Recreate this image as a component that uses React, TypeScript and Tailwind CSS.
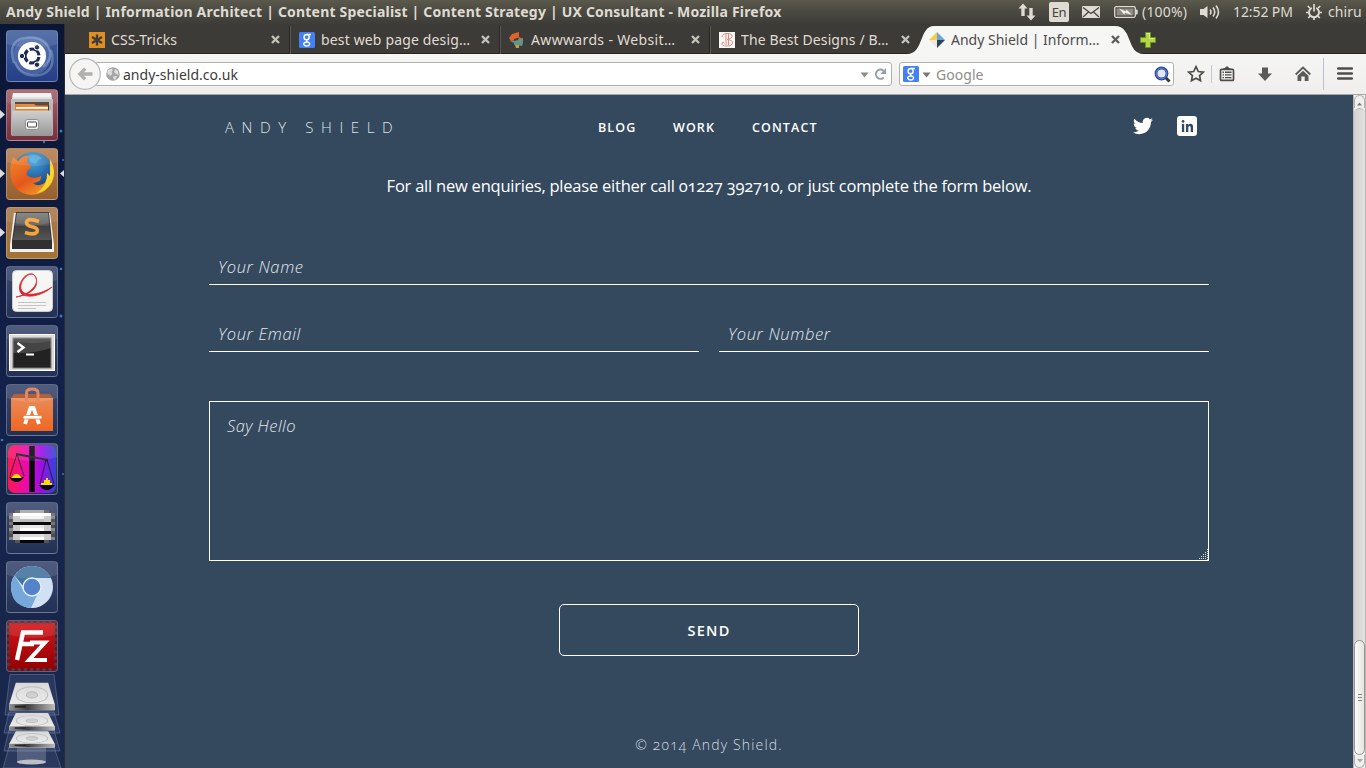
import type { ReactNode } from "react";

const UI = "font-['Noto_Sans','Open_Sans',sans-serif]";

function Tile({ bg, children, left, right }: { bg: string; children: ReactNode; left?: boolean; right?: boolean }) {
  return (
    <div className="relative h-[52px] w-[52px] shrink-0">
      <div className={`h-[52px] w-[52px] overflow-hidden rounded-[4px] border border-white/25 ${bg}`}>
        <svg width="50" height="50" viewBox="1 1 50 50">
          {children}
          <path d="M1 1H51V14Q28 22 1 14Z" fill="#fff" opacity=".1" />
        </svg>
      </div>
      {left && (
        <svg className="absolute -left-[6px] top-[20px]" width="6" height="11" viewBox="0 0 6 11">
          <path d="M0 1L5 5.5L0 10Z" fill="#dcdcdc" />
        </svg>
      )}
      {right && (
        <svg className="absolute left-[53px] top-[20px]" width="6" height="11" viewBox="0 0 6 11">
          <path d="M6 1L1 5.5L6 10Z" fill="#dcdcdc" />
        </svg>
      )}
    </div>
  );
}

const DARK = "bg-gradient-to-b from-[#3b4a70] to-[#243156]";

function Disk({ y, sy }: { y: number; sy: number }) {
  return (
    <g transform={`translate(32 ${y}) scale(1.01 ${sy})`}>
      <path d="M-16 -18H16L22.500 3V9H-22.500V3Z" fill="url(#diskTop)" />
      <ellipse cx="0" cy="-6" rx="15.500" ry="8" fill="none" stroke="#bdbdbd" strokeWidth="1" />
      <ellipse cx="0" cy="-6" rx="5.500" ry="3" fill="#d0d0d0" stroke="#b5b5b5" />
      <rect x="-22.500" y="3" width="45" height="6" fill="url(#diskEdge)" />
      <rect x="-17" y="4.500" width="11" height="2" fill="#222" />
    </g>
  );
}

function Launcher() {
  const rows = [
    { x: 9, w: 34, e: "#5d5d5d", c: "#a8a8a8" },
    { x: 3, w: 46, e: "#6a6a6a", c: "#ffffff" },
    { x: 3, w: 46, e: "#8a8a8a", c: "#f4f4f4" },
    { x: 3, w: 46, e: "#555555", c: "#bdbdbd" },
    { x: 3, w: 46, e: "#777777", c: "#0a0a0a" },
    { x: 3, w: 46, e: "#4a4a4a", c: "#e8e8e8" },
    { x: 3, w: 46, e: "#8a8a8a", c: "#ffffff" },
    { x: 3, w: 46, e: "#606060", c: "#0c0c0c" },
    { x: 3, w: 46, e: "#4d4d4d", c: "#dcdcdc" },
    { x: 3, w: 46, e: "#858585", c: "#ffffff" },
    { x: 9, w: 34, e: "#555555", c: "#050505" },
  ];
  return (
    <aside className="relative flex w-[65px] shrink-0 flex-col gap-[7px] overflow-hidden border-r border-[#2a2b33] bg-gradient-to-b from-[#0b1535] via-[#13224b] to-[#1b284c] pl-[6px] pt-[6px]">
      <svg className="absolute left-0 top-0" width="65" height="744">
        <g fill="#3b78b8">
          <circle cx="61" cy="107" r="1.500" />
          <circle cx="44" cy="118" r="1.200" />
          <circle cx="61" cy="245" r="1.300" />
          <circle cx="61" cy="292" r="1.500" />
          <circle cx="2" cy="416" r="1.300" />
          <circle cx="63" cy="450" r="1" />
          <circle cx="63" cy="136" r="1" />
        </g>
      </svg>

      <Tile bg="bg-gradient-to-b from-[#43629f] to-[#253f87]">
        <circle cx="26" cy="26" r="19" fill="#6d87bb" opacity=".45" />
        <path d="M8 33Q1 12 18 8Q39 5 44 21Q46 30 37 37" fill="none" stroke="#9fb3d9" strokeWidth="2.500" opacity=".45" />
        <path d="M45 20Q51 40 34 45Q15 48 9 32" fill="none" stroke="#9fb3d9" strokeWidth="2.500" opacity=".4" />
        <circle cx="26" cy="26" r="14" fill="#fff" />
        <circle cx="26" cy="26" r="7" fill="none" stroke="#1d2c56" strokeWidth="3.200" strokeDasharray="12.660 2" strokeDashoffset="-1" />
        <g fill="#1d2c56" stroke="#fff" strokeWidth="1">
          <circle cx="16" cy="26" r="2.700" />
          <circle cx="31" cy="17.300" r="2.700" />
          <circle cx="31" cy="34.700" r="2.700" />
        </g>
      </Tile>

      <Tile bg="bg-gradient-to-b from-[#a3616b] to-[#772f3b]" left>
        <path d="M7 4H45L47 16H5Z" fill="#dedede" />
        <path d="M7 4H45L45.500 8H6.500Z" fill="#f2f2f2" />
        <rect x="5" y="10" width="42" height="36" fill="#b5b5b5" />
        <rect x="9" y="13" width="34" height="9" fill="#4a3428" />
        <path d="M9 15H28L30 16.500H42V22H9Z" fill="#e57f28" />
        <rect x="10" y="18" width="32" height="1.800" fill="#fff" />
        <path d="M6.500 21.500H45.500L46.500 47H5.500Z" fill="url(#silver)" />
        <rect x="19.500" y="30.500" width="13" height="10" rx="2" fill="#f0f0f0" stroke="#8f8f8f" />
        <rect x="21.500" y="33" width="9" height="5" rx="1" fill="#fff" stroke="#444" />
      </Tile>

      <Tile bg="bg-gradient-to-b from-[#b57f55] to-[#96602f]" left right>
        <circle cx="27" cy="24" r="20" fill="url(#globe)" />
        <path d="M22 8Q30 5 36 10Q31 12 30 16L24 14Z" fill="#62b5e5" opacity=".6" />
        <path d="M7 9L12 13Q17 7 23 8L21 14Q28 19 22 22Q18 27 24 29Q30 31 35 28Q36 34 27 35Q33 40 40 34Q48 27 45 13Q51 25 45 36Q39 46 26 47Q11 46 6 34Q2 21 7 9Z" fill="url(#fox)" />
        <path d="M44 11Q51 23 46 34Q40 44 31 45Q42 36 41 25L44 28Z" fill="#fbd52c" />
      </Tile>

      <Tile bg="bg-gradient-to-b from-[#a8794d] to-[#a47231]" left>
        <path d="M8 6H44L48 38V45H4V38Z" fill="#f1f1f1" />
        <path d="M10 5H43L46 34V42H6V34Z" fill="#303030" />
        <path d="M11 6H42L45 33H7Z" fill="url(#key)" />
        <path d="M33 14.500Q22 10.500 20.500 15Q20 19 27 20Q33 21.500 31 25Q28 28.500 19 25.500" fill="none" stroke="#f8a33a" strokeWidth="3.600" />
      </Tile>

      <Tile bg={DARK}>
        <rect x="6.500" y="4.500" width="40" height="41" rx="4" fill="#f5f5f3" stroke="#ccc" />
        <path d="M10 31C24 29 35 21 29 10C24 4 13 15 15 23C18 32 36 28 46 21C37 29 25 32 17 29C8 23 18 5 27 8C36 14 27 28 10 31Z" fill="#da2430" stroke="#da2430" strokeWidth=".8" />
        <path d="M12 36.500H40M12 39.500H40M12 42.500H30" stroke="#c4c4c4" strokeWidth="1.200" />
      </Tile>

      <Tile bg={DARK}>
        <rect x="3.500" y="9.500" width="45" height="36" fill="#d9d9d9" stroke="#fff" />
        <rect x="7" y="13" width="38" height="30" fill="#222" stroke="#777" />
        <path d="M7 13H45V23Q28 29 7 28Z" fill="#fff" opacity=".16" />
        <path d="M11.500 18L17.500 22.500L11.500 27" fill="none" stroke="#fff" strokeWidth="2.400" />
        <path d="M20 29.500H28" stroke="#fff" strokeWidth="2.200" />
      </Tile>

      <Tile bg={DARK}>
        <path d="M5 14L8 10H44L47 14V47H5Z" fill="#a94e25" />
        <path d="M5 14H47V47H5Z" fill="url(#bag)" />
        <path d="M20.500 17V9Q20.500 5 26 5Q32 5 32 9V17" fill="none" stroke="#e27a4e" strokeWidth="3" />
        <path d="M19 40L24.500 24H27.500L33 40" fill="none" stroke="#fff" strokeWidth="3.800" />
        <rect x="17" y="31.500" width="19" height="3.500" rx="1.500" fill="#fff" stroke="#ee702e" strokeWidth=".7" />
      </Tile>

      <Tile bg={DARK}>
        <rect x="2" y="2" width="48" height="48" rx="7" fill="url(#scales)" />
        <path d="M26 3V49" stroke="#090909" strokeWidth="5.500" />
        <g stroke="#231827" fill="none">
          <path d="M10 11L42 17" strokeWidth="1.800" />
          <path d="M11 11L4 33M11 11L18 33M40 17L34 41M41 17L48 41" strokeWidth=".9" />
        </g>
        <path d="M3 34H18Q15 39 10.500 39Q6 39 3 34ZM33 42H49Q45 47 41 47Q36 47 33 42Z" fill="#090909" />
        <path d="M5 35L9 31H12L16 35ZM35 42V40H38V37H40V35H42V37H44V40H46V42Z" fill="#fd0" />
      </Tile>

      <Tile bg={DARK}>
        {rows.map((r, i) => (
          <g key={i}>
            <rect x={r.x} y={8 + i * 3} width={r.w} height="3" fill={r.e} />
            <rect x="7" y={8 + i * 3} width={i === 0 || i === 10 ? 0 : 38} height="3" fill={i % 3 === 1 ? r.c : "#c9c9c9"} />
            <rect x="14" y={8 + i * 3} width="24" height="3" fill={r.c} />
            <rect x="20" y={8 + i * 3} width="13" height="3" fill={r.c} />
          </g>
        ))}
      </Tile>

      <Tile bg={DARK}>
        <circle cx="26" cy="26" r="21" fill="#cfe1f3" />
        <path d="M8.500 14.500Q15 5 26 5Q39 5 45 17H26Q18 18 17 25Z" fill="#43739f" />
        <path d="M8.500 14.500L18 30Q21 35 27 35L31 34L25 47Q5 45 5 26Q5 19 8.500 14.500Z" fill="#76a8da" />
        <circle cx="26" cy="26" r="9" fill="#5583cb" stroke="#e6f1fc" strokeWidth="1.400" />
      </Tile>

      <Tile bg="bg-[#4a2034]">
        <rect x="3" y="3" width="46" height="46" fill="url(#fz)" />
        <g fill="none" stroke="#5d3345" strokeWidth="3.600" strokeDasharray="0.010 6.200" strokeLinecap="round">
          <path d="M7 2.500H48M7 49.500H48M2.500 7V48M49.500 7V48" />
        </g>
        <g fill="none" stroke="#fff" strokeWidth="4.500">
          <path d="M11 40L17 12.500H37M14 24H28" />
          <path d="M24 22.500H39L23 40H41" strokeWidth="4" />
        </g>
      </Tile>

      <svg className="absolute left-0 top-[650px]" width="65" height="94" viewBox="0 0 65 94">
        <g fill="#8ca0cc" fillOpacity=".14" stroke="#94a5cb" strokeOpacity=".35">
          <path d="M10 .5H54L59 41H5Z" />
          <path d="M9 38H54L60 59H4Z" />
          <path d="M9 56H54L60 77H4Z" />
          <path d="M9 73H54L61 94H3Z" />
        </g>
        <rect x="17" y="73" width="29" height="15" fill="#aeb5c4" opacity=".3" />
        <ellipse cx="31.500" cy="88" rx="14.500" ry="2.500" fill="#bcc0c4" />
        <Disk y={50.500} sy={0.64} />
        <Disk y={68} sy={0.6} />
        <Disk y={27} sy={1.02} />
      </svg>

      <svg className="absolute" width="0" height="0">
        <defs>
          <linearGradient id="silver" x2="0" y2="1"><stop stopColor="#d0d0d0" /><stop offset="1" stopColor="#979797" /></linearGradient>
          <radialGradient id="globe" cx=".5" cy=".2" r=".8"><stop stopColor="#43a5df" /><stop offset="1" stopColor="#123673" /></radialGradient>
          <linearGradient id="fox" x2=".7" y2="1"><stop stopColor="#f18a2b" /><stop offset=".6" stopColor="#e5571d" /><stop offset="1" stopColor="#f49a25" /></linearGradient>
          <linearGradient id="key" x2="0" y2="1"><stop stopColor="#7c7c7c" /><stop offset=".45" stopColor="#5a5a5a" /><stop offset=".5" stopColor="#404040" /><stop offset="1" stopColor="#555" /></linearGradient>
          <linearGradient id="bag" x2="0" y2="1"><stop stopColor="#ea8b57" /><stop offset="1" stopColor="#ef6623" /></linearGradient>
          <linearGradient id="scales"><stop stopColor="#ff1654" /><stop offset=".4" stopColor="#e90bae" /><stop offset=".7" stopColor="#9b0ee8" /><stop offset="1" stopColor="#3145d7" /></linearGradient>
          <linearGradient id="fz" x2="0" y2="1"><stop stopColor="#d2151b" /><stop offset="1" stopColor="#950000" /></linearGradient>
          <linearGradient id="diskTop" x2="0" y2="1"><stop stopColor="#d9d9d9" /><stop offset="1" stopColor="#f0f0f0" /></linearGradient>
          <linearGradient id="diskEdge"><stop stopColor="#909090" /><stop offset=".4" stopColor="#404040" /><stop offset="1" stopColor="#bbb" /></linearGradient>
        </defs>
      </svg>
    </aside>
  );
}

function TopPanel() {
  return (
    <header className={`${UI} flex h-[24px] items-center justify-between bg-gradient-to-b from-[#5b594c] via-[#4a4941] to-[#3d3c37] pl-[6px] pr-[4px] text-[#dfdbd2]`}>
      <span className="whitespace-nowrap text-[14px] font-bold leading-[24px] tracking-[0.2px]">
        Andy Shield | Information Architect | Content Specialist | Content Strategy | UX Consultant - Mozilla Firefox
      </span>
      <div className="flex h-[24px] items-center whitespace-nowrap text-[14px] leading-[24px]">
        <svg width="18" height="18" viewBox="0 0 18 18" className="mr-[13px]">
          <path d="M5 0.500L9.500 5.500H6.700V13H3.300V5.500H0.500ZM13 17.500L8.500 12.500H11.300V5H14.700V12.500H17.500Z" fill="#dfdbd2" />
        </svg>
        <div className="mr-[13px] flex h-[20px] w-[20px] items-center justify-center rounded-[2px] bg-[#dfdbd2] text-[13px] tracking-[-0.5px] text-[#44433d]">En</div>
        <svg width="18" height="12" viewBox="0 0 18 12" className="mr-[14px]">
          <rect width="18" height="12" rx="1" fill="#dfdbd2" />
          <path d="M1 1.500L9 7.500L17 1.500M1 11L6.500 6M17 11L11.500 6" fill="none" stroke="#44433d" strokeWidth="1.200" />
        </svg>
        <svg width="24" height="12" viewBox="0 0 24 12" className="mr-[4px]">
          <rect x=".7" y=".7" width="20.600" height="10.600" rx="1.500" fill="none" stroke="#dfdbd2" strokeWidth="1.300" />
          <rect x="2.500" y="2.500" width="17" height="7" fill="#8f8c83" />
          <rect x="21.500" y="3.500" width="2.200" height="5" rx="1" fill="#dfdbd2" />
          <path d="M5 2.500L12 5.500L12.500 3.500L18 9L11 6.800L10.500 8.800Z" fill="#f4f1ea" />
        </svg>
        <span className="w-[47px] tracking-[0.2px]">(100%)</span>
        <svg width="20" height="16" viewBox="0 0 20 16" className="ml-[11px] mr-[13px]">
          <path d="M0 5H3.500L7.500 2V14L3.500 11H0Z" fill="#dfdbd2" />
          <path d="M10 5.500Q12 8 10 10.500M13 3.500Q16.500 8 13 12.500M16 1.500Q21 8 16 14.500" fill="none" stroke="#dfdbd2" strokeWidth="1.600" />
        </svg>
        <span className="w-[61px] tracking-[-0.1px]">12:52 PM</span>
        <svg width="16" height="16" viewBox="0 0 16 16" className="ml-[12px] mr-[6px]">
          <path d="M5.700 3.800A5 5 0 1 0 10.300 3.800" fill="none" stroke="#dfdbd2" strokeWidth="1.900" />
          <path d="M8 0V7.500M1.800 2L3.800 4M14.200 2L12.200 4M0 8.500H2.500M13.500 8.500H16M2.200 14L4.200 12M13.800 14L11.800 12M8 13V16" stroke="#dfdbd2" strokeWidth="1.700" />
        </svg>
        <span className="w-[34px] tracking-[0.05px]">chiru</span>
      </div>
    </header>
  );
}

function Tab({ icon, label, active, sep, ls }: { icon: ReactNode; label: string; active?: boolean; sep?: boolean; ls: string }) {
  return (
    <div className="relative flex h-[30px] w-[210px] shrink-0 items-center pb-px pl-[8px]">
      {active && (
        <svg className="absolute -left-[14px] top-[1px]" width="238" height="29" viewBox="0 0 238 29">
          <path d="M0 29C17 29 12 1 27 1H208C226 1 219 29 237 29Z" fill="#f6f6f5" />
        </svg>
      )}
      <svg width="16" height="16" viewBox="0 0 16 16" className="relative mt-[3px]">{icon}</svg>
      <span className={`relative ml-[6px] mt-[3px] w-[160px] overflow-hidden whitespace-nowrap text-[14px] leading-[20px] ${ls} ${active ? "text-[#4c4c4c]" : "text-[#e0dcd3]"}`}>{label}</span>
      <svg width="9" height="9" viewBox="0 0 9 9" className="relative mt-[3px]">
        <path d="M1 1L8 8M8 1L1 8" stroke={active ? "#5d5d5b" : "#c4c1b9"} strokeWidth="2.400" />
      </svg>
      {sep && <div className="absolute right-0 top-[2px] h-[28px] w-[2px] border-l border-[#292826] bg-[#5a5852]" />}
    </div>
  );
}

const GoogleG = (
  <>
    <rect width="16" height="16" rx="1.500" fill="#4480f5" />
    <path d="M12 2.500H8.200C6 2.500 5 3.800 5 5.200C5 6.800 6.200 7.700 7.600 7.700C9 7.700 10.200 6.800 10.200 5.200C10.200 3.800 9.400 2.600 7.800 2.500M7.800 7.700C6.800 8.500 7.600 9.300 8.600 9.800C12 11.200 10.500 14 7.800 14C4.400 14 3.700 11.200 6.300 10.300L8.500 10" fill="none" stroke="#fff" strokeWidth="1.400" />
  </>
);

function TabBar() {
  return (
    <div className="flex h-[30px] items-center border-b border-[#262522] bg-[#3c3b37] pl-[16px]">
      <Tab
        sep
        label="CSS-Tricks"
        ls="tracking-[0.05px]"
        icon={
          <>
            <rect width="16" height="16" fill="#e08e1d" />
            <path d="M8 2.500V13.500M3 5L13 11M13 5L3 11" stroke="#3c3b37" strokeWidth="2.300" />
          </>
        }
      />
      <Tab sep label="best web page desig…" ls="tracking-[0.15px]" icon={GoogleG} />
      <Tab
        sep
        label="Awwwards - Websit…"
        ls="tracking-[0.35px]"
        icon={
          <>
            <path d="M3 2L10 0V5L14 7L9 9L6 8L2 9L0 6Z" fill="#e2622a" />
            <path d="M13 14L5 13V11L1 9L7 8H10L14 6L14 11Z" fill="#5f958a" />
            <path d="M5 7L10 5.500L9 8L5 9Z" fill="#274647" />
            <path d="M6 13H10V16H7Z" fill="#cf9a3d" />
          </>
        }
      />
      <Tab
        label="The Best Designs / B…"
        ls="tracking-[0.12px]"
        icon={
          <>
            <rect width="16" height="16" fill="#fbf8f3" />
            <path d="M7 2V13M9.500 2V13M3 5Q3 1.500 8 1.500Q13.500 1.500 13 4.500Q12.500 7 8 7.500Q14 8 13.500 11Q13 14 8 14Q2 14 3 11Q4 9.500 5.500 11" fill="none" stroke="#e38a86" strokeWidth="1" />
          </>
        }
      />
      <Tab
        active
        label="Andy Shield | Inform…"
        ls="tracking-[0px]"
        icon={
          <>
            <path d="M8 0V8H0Z" fill="#f4cf42" />
            <path d="M8 0L16 8H8Z" fill="#6aa7dc" />
            <path d="M0 8H8V16Z" fill="#ebe8e2" />
            <path d="M8 8H16L8 16Z" fill="#2c4257" />
          </>
        }
      />
      <svg width="16" height="16" viewBox="0 0 16 16" className="ml-[9px] mt-[2px]">
        <path d="M5.500 .5H10.500V5.500H15.500V10.500H10.500V15.500H5.500V10.500H.5V5.500H5.500Z" fill="#b3d444" stroke="#6b9320" />
        <path d="M6.500 1.500H9.500V6.500H14.500" fill="none" stroke="#dcee97" />
      </svg>
    </div>
  );
}

function Toolbar() {
  return (
    <div className="flex h-[41px] items-center border-b border-[#a9a6a1] bg-gradient-to-b from-[#f6f6f5] to-[#efeeec]">
      <svg width="34" height="34" viewBox="0 0 34 34" className="z-10 ml-[3px]">
        <circle cx="17" cy="17" r="15.300" fill="#f6f5f4" stroke="#b3b6bb" strokeWidth="1.200" />
        <path d="M9.500 17L16 10.500L18.300 12.800L15.800 15.200H24.500V18.800H15.800L18.300 21.200L16 23.500Z" fill="#b1b0ad" />
      </svg>
      <div className="-ml-[6px] flex h-[24px] w-[796px] items-center rounded-r-[3px] border border-[#b2b1ac] bg-white pl-[9px] pr-[4px]">
        <svg width="14" height="14" viewBox="0 0 14 14">
          <circle cx="7" cy="7" r="6.800" fill="#a4a4a4" />
          <path d="M2 3L5 1.500L7 3L5.500 5L6.500 7L4 9L1 6ZM9 2L12 4L12.500 8L10 7L8 5ZM8 9L11 9L9 13L7 11Z" fill="#dedede" />
        </svg>
        <span className="ml-[3px] grow text-[14px] tracking-[0.02px] text-[#3c3c3c]">andy-shield.co.uk</span>
        <svg width="9" height="6" viewBox="0 0 9 6" className="mr-[5px] mt-px"><path d="M.5 .5H8.500L4.500 5.500Z" fill="#8c8c88" /></svg>
        <svg width="13" height="14" viewBox="0 0 13 14">
          <path d="M9.700 10.500A4.600 4.600 0 1 1 9.500 3.700" fill="none" stroke="#93a0a8" strokeWidth="2" />
          <path d="M12 1V7H6.300Z" fill="#93a0a8" />
        </svg>
      </div>
      <div className="ml-[7px] flex h-[24px] w-[275px] items-center rounded-[3px] border border-[#b2b1ac] bg-white pl-[3px] pr-[2px]">
        <svg width="16" height="16" viewBox="0 0 16 16">{GoogleG}</svg>
        <svg width="9" height="6" viewBox="0 0 9 6" className="ml-[3px] mt-px"><path d="M.5 .5H8.500L4.500 5.500Z" fill="#777773" /></svg>
        <span className="ml-[5px] grow text-[14px] tracking-[0.05px] text-[#8e8e8c]">Google</span>
        <svg width="17" height="17" viewBox="0 0 17 17">
          <path d="M11.500 11.500L15.500 15.500" stroke="#3b3330" strokeWidth="3" />
          <circle cx="7.500" cy="7.500" r="5.500" fill="#dfe8f8" stroke="#2d489b" strokeWidth="2.800" />
          <circle cx="7.500" cy="7.500" r="5.300" fill="none" stroke="#7d95d8" strokeWidth=".7" />
        </svg>
      </div>
      <svg width="18" height="18" viewBox="0 0 18 18" className="ml-[13px]">
        <path d="M9 1.700L11.300 6.500L16.300 7.100L12.600 10.500L13.500 15.600L9 13.200L4.500 15.600L5.400 10.500L1.700 7.100L6.700 6.500Z" fill="none" stroke="#4e4e4c" strokeWidth="1.700" />
      </svg>
      <div className="ml-[6px] h-[18px] w-px bg-[#c3c9d0]" />
      <svg width="16" height="16" viewBox="0 0 16 16" className="ml-[7px]">
        <path d="M4.500 3V2H6L7 .5H9L10 2H11.500V3" fill="#4e4e4c" />
        <rect x="1.500" y="3.400" width="13" height="11" rx="1" fill="none" stroke="#4e4e4c" strokeWidth="1.700" />
        <path d="M3.500 6.200H5M6 6.200H12.500M3.500 8.900H5M6 8.900H12.500M3.500 11.600H5M6 11.600H12.500" stroke="#4e4e4c" strokeWidth="1.400" />
      </svg>
      <svg width="14" height="16" viewBox="0 0 14 16" className="ml-[23px]">
        <path d="M4 1.500H10V7.500H14L7 15L0 7.500H4Z" fill="#5a5a58" />
      </svg>
      <svg width="16" height="16" viewBox="0 0 16 16" className="ml-[23px]">
        <path d="M.7 8.500L8 1.500L15.300 8.500" fill="none" stroke="#5a5a58" strokeWidth="1.800" />
        <path d="M8 4.700L13.500 9.800V15H9.700V10.500H6.300V15H2.500V9.800Z" fill="#5a5a58" />
      </svg>
      <div className="ml-[12px] h-[32px] w-px bg-[#b9c2cb]" />
      <svg width="16" height="13" viewBox="0 0 16 13" className="ml-[13px] mb-[2px]">
        <path d="M1.200 1.500H14.800M1.200 6.500H14.800M1.200 11.500H14.800" stroke="#4e4e4c" strokeWidth="2.500" strokeLinecap="round" />
      </svg>
    </div>
  );
}

function Page() {
  return (
    <main className="flex grow flex-col items-center bg-[#34495e] font-['Open_Sans','Noto_Sans',sans-serif] text-white">
      <nav className="flex h-[64px] w-[1000px] items-center pl-[16px] pr-[12px]">
        <span className="w-[373px] whitespace-nowrap pt-px text-[15px] font-light tracking-[7.6px] text-[#dfe4e9]">ANDY SHIELD</span>
        <span className="w-[75px] pt-[2px] text-[12.500px] font-semibold tracking-[1.1px]">BLOG</span>
        <span className="w-[79px] pt-[2px] text-[12.500px] font-semibold tracking-[1.1px]">WORK</span>
        <span className="pt-[2px] text-[12.500px] font-semibold tracking-[1.1px]">CONTACT</span>
        <svg width="20" height="18" viewBox="0 2 24 20" className="ml-auto mt-[-2px]">
          <path d="M23.950 4.570a10 10 0 0 1-2.820.770 4.960 4.960 0 0 0 2.160-2.720c-.950.550-2 .950-3.130 1.180a4.920 4.920 0 0 0-8.380 4.480C7.690 8.090 4.070 6.130 1.640 3.160a4.820 4.820 0 0 0-.670 2.480c0 1.710.870 3.210 2.190 4.100a4.900 4.900 0 0 1-2.230-.620v.060a4.920 4.920 0 0 0 3.950 4.830 5 5 0 0 1-2.210.080 4.940 4.940 0 0 0 4.600 3.420A9.870 9.870 0 0 1 0 19.540a14 14 0 0 0 7.550 2.210c9.050 0 14-7.500 14-13.980 0-.210 0-.420-.020-.630a9.940 9.940 0 0 0 2.460-2.550z" fill="#fff" />
        </svg>
        <svg width="20" height="20" viewBox="0 0 20 20" className="ml-[24px] mt-[-2px]">
          <rect width="20" height="20" rx="3" fill="#fff" />
          <path d="M4.900 8H7.200V16H4.900ZM9 8H11.300V9.200Q12 7.800 13.500 7.800Q16 7.800 16 11V16H13.700V11.600Q13.700 9.900 12.600 9.900Q11.300 9.900 11.300 11.600V16H9Z" fill="#34495e" />
          <circle cx="6.050" cy="5.400" r="1.400" fill="#34495e" />
        </svg>
      </nav>
      <p className="mt-[13px] h-[28px] whitespace-nowrap text-[16.500px] leading-[28px] tracking-[-0.225px] oldstyle-nums">
        For all new enquiries, please either call 01227 392710, or just complete the form below.
      </p>
      <form className="mt-[50px] flex w-[1000px] flex-col text-[16.500px] font-light italic tracking-[0.62px] text-[#e3e8ec]">
        <label className="h-[35px] border-b border-white pl-[9px] leading-[34px]">Your Name</label>
        <div className="mt-[32px] flex gap-[20px]">
          <label className="h-[35px] w-[490px] border-b border-white pl-[9px] leading-[34px]">Your Email</label>
          <label className="h-[35px] w-[490px] border-b border-white pl-[9px] leading-[34px]">Your Number</label>
        </div>
        <label className="relative mt-[49px] h-[160px] border border-white pl-[17px] pt-[7px] leading-[34px] tracking-[0.45px]">
          Say Hello
          <svg className="absolute bottom-0 right-0" width="11" height="11" viewBox="0 0 11 11">
            <path d="M10.500 0V11M8.500 3V11M6.500 5V11M4.500 7V11M2.500 9V11" stroke="#d4d9de" strokeWidth="1" strokeDasharray="1 1" />
          </svg>
        </label>
        <div className="mt-[43px] flex h-[52px] w-[300px] items-center justify-center self-center rounded-[5px] border border-white pt-[2px] text-[14.500px] font-semibold not-italic tracking-[1.25px] text-white">SEND</div>
      </form>
      <footer className="mt-[78px] whitespace-nowrap text-[14px] font-light leading-[22px] tracking-[1.15px] text-[#d3dae0] oldstyle-nums">© 2014 Andy Shield.</footer>
    </main>
  );
}

function Scrollbar() {
  return (
    <div className="flex w-[13px] shrink-0 flex-col border-x border-[#bab8b5] bg-[#f1f0ef]">
      <div className="flex h-[13px] items-center justify-center rounded-t-full border border-b-0 border-[#b5b2ae] bg-[#f1f0ef]">
        <svg width="5" height="4" className="mt-[3px]"><path d="M0 3.500L2.500 .5L5 3.500Z" fill="#777" /></svg>
      </div>
      <div className="-mb-[8px] grow rounded-t-full border-t border-[#b5b2ae] bg-gradient-to-r from-[#d1d0ce] to-[#e3e2e1]" />
      <div className="flex h-[115px] flex-col items-center justify-center gap-[2px] rounded-full border border-[#98948f] bg-gradient-to-r from-[#fbfbfb] to-[#e5e4e2]">
        <div className="h-px w-[4px] bg-[#8b8883]" />
        <div className="h-px w-[4px] bg-[#8b8883]" />
        <div className="h-px w-[4px] bg-[#8b8883]" />
      </div>
      <div className="flex h-[13px] items-center justify-center rounded-b-full border border-t-0 border-[#b5b2ae] bg-[#f1f0ef]">
        <svg width="6" height="4"><path d="M0 0H6L3 3.500Z" fill="#aaa" /></svg>
      </div>
    </div>
  );
}

export default function App() {
  return (
    <div className="flex h-[768px] w-[1366px] flex-col overflow-hidden">
      <TopPanel />
      <div className="flex min-h-0 grow">
        <Launcher />
        <div className={`${UI} flex min-w-0 grow flex-col`}>
          <TabBar />
          <Toolbar />
          <div className="flex min-h-0 grow">
            <Page />
            <Scrollbar />
          </div>
        </div>
      </div>
    </div>
  );
}
